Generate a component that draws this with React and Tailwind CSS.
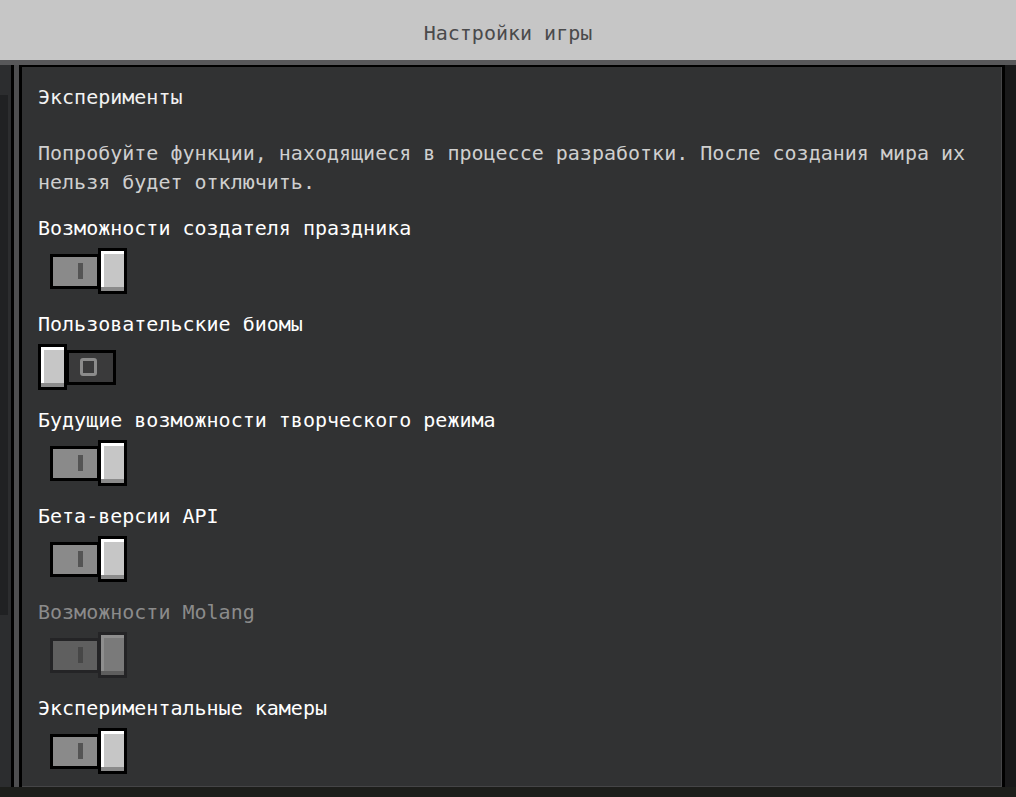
import React, { useState } from 'react';

const font = { fontFamily: '"DejaVu Sans Mono", "Liberation Mono", monospace' };

const experiments = [
  { id: 'holiday', label: 'Возможности создателя праздника', on: true },
  { id: 'biomes', label: 'Пользовательские биомы', on: false },
  { id: 'creative', label: 'Будущие возможности творческого режима', on: true },
  { id: 'api', label: 'Бета-версии API', on: true },
  { id: 'molang', label: 'Возможности Molang', on: true, disabled: true },
  { id: 'cameras', label: 'Экспериментальные камеры', on: true },
];

const Knob = ({ disabled }) => (
  <div
    className={`relative z-10 w-[29px] h-[46px] border-[3px] ${
      disabled ? 'border-[#242426] bg-[#7a7a7a]' : 'border-black bg-[#c6c6c6]'
    }`}
  >
    <div className={`absolute left-0 top-0 right-0 h-[3px] ${disabled ? 'bg-[#8e8e8e]' : 'bg-white'}`} />
    <div className={`absolute left-0 top-0 bottom-0 w-[3px] ${disabled ? 'bg-[#8e8e8e]' : 'bg-white'}`} />
    <div className={`absolute left-0 right-0 bottom-0 h-[4px] ${disabled ? 'bg-[#5e5e5e]' : 'bg-[#8b8b8b]'}`} />
  </div>
);

const Toggle = ({ on, disabled, onClick }) => {
  if (on) {
    return (
      <button onClick={onClick} disabled={disabled} className="flex items-center h-[46px] ml-[12px]">
        <div
          className={`w-[50px] h-[35px] border-[3px] flex items-center justify-center ${
            disabled ? 'border-[#242426] bg-[#5f5f5f]' : 'border-black bg-[#8a8a8a]'
          }`}
        >
          <div className={`w-[5px] h-[16px] ml-[10px] ${disabled ? 'bg-[#474747]' : 'bg-[#545454]'}`} />
        </div>
        <div className="-ml-[2px]">
          <Knob disabled={disabled} />
        </div>
      </button>
    );
  }
  return (
    <button onClick={onClick} disabled={disabled} className="flex items-center h-[46px]">
      <Knob disabled={disabled} />
      <div className="-ml-[1px] w-[50px] h-[35px] border-[3px] border-black bg-[#3a3a3b] flex items-center justify-center">
        <div className="w-[17px] h-[18px] border-[3px] border-[#8b8b8b] rounded-[3px] mr-[6px]" />
      </div>
    </button>
  );
};

const App = () => {
  const [state, setState] = useState(
    Object.fromEntries(experiments.map((e) => [e.id, e.on]))
  );

  return (
    <div className="w-[1016px] h-[797px] bg-[#1d1e1b] flex flex-col overflow-hidden" style={font}>
      <div className="h-[60px] bg-[#c6c6c6] flex items-center justify-center">
        <span className="text-[20px] text-[#4a4a4b] mt-[5px]">Настройки игры</span>
      </div>
      <div className="h-[5px] bg-[#58585a]" />

      <div className="h-[722px] flex">
        <div className="w-[11px] bg-[#2c2d2f] flex flex-col pt-[30px]">
          <div className="h-[520px] bg-[#202123] mr-[3px]" />
        </div>
        <div className="w-[3px] bg-black" />
        <div className="w-[5px] bg-[#4e4e50]" />

        <div className="flex-1 border-t-[2px] border-l-[3px] border-r-[3px] border-black bg-[#313233] overflow-hidden">
          <div className="h-full border-r border-b border-[#454547] px-[16px] pt-[15px]">
            <h1 className="h-[30px] leading-[30px] text-[20px] text-[#f2f2f2]">Эксперименты</h1>
            <p className="mt-[27px] leading-[29px] text-[20px] text-[#cfcfcf]">
              Попробуйте функции, находящиеся в процессе разработки. После создания мира их нельзя будет отключить.
            </p>
            <div className="flex flex-col gap-[15px] mt-[16px]">
              {experiments.map((e) => (
                <div key={e.id} className="flex flex-col">
                  <span
                    className={`h-[30px] leading-[30px] text-[20px] ${
                      e.disabled ? 'text-[#8b8b8b]' : 'text-white'
                    }`}
                  >
                    {e.label}
                  </span>
                  <div className="mt-[5px]">
                    <Toggle
                      on={state[e.id]}
                      disabled={e.disabled}
                      onClick={() => setState((s) => ({ ...s, [e.id]: !s[e.id] }))}
                    />
                  </div>
                </div>
              ))}
            </div>
          </div>
        </div>

        <div className="w-[11px] bg-[#19191a]" />
      </div>
    </div>
  );
};

export default App;
